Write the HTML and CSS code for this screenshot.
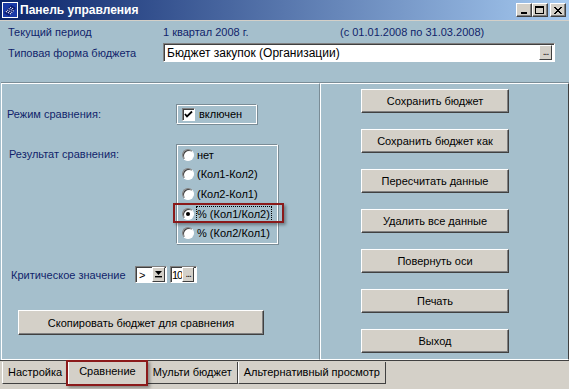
FILE: index.html
```html
<!DOCTYPE html>
<html lang="ru">
<head>
  <meta charset="UTF-8">
  <meta name="viewport" content="width=device-width, initial-scale=1.0">
  <title>Панель управления</title>
  <link rel="stylesheet" href="styles.css">
</head>
<body>
  <div class="window">
    <div class="titlebar">
      <svg class="app-icon" width="16" height="16" viewBox="0 0 16 16">
        <rect x="0" y="0" width="16" height="16" fill="#fff"/>
        <rect x="1" y="1" width="14" height="14" fill="#1a3aa8"/>
        <path d="M2 11 L9 3 L14 6 L7 14 Z" fill="#0a1a70"/>
        <path d="M4 10 L9 5 M6 11 L11 6 M8 12 L12 8" stroke="#fff" stroke-width="1.2" stroke-dasharray="1 1"/>
      </svg>
      <span class="title">Панель управления</span>
      <div class="wbtns">
        <span class="wbtn"><span class="min-glyph"></span></span>
        <span class="wbtn"><span class="max-glyph"></span></span>
        <span class="wbtn close">
          <svg width="8" height="7" viewBox="0 0 8 7"><path d="M0 0 L7 7 M1 0 L8 7 M7 0 L0 7 M8 0 L1 7" stroke="#000" stroke-width="1"/></svg>
        </span>
      </div>
    </div>

    <div class="client">
      <div class="header">
        <div class="row">
          <span class="label">Текущий период</span>
          <span class="period">1 квартал 2008 г.</span>
          <span class="dates">(с 01.01.2008 по 31.03.2008)</span>
        </div>
        <div class="row">
          <span class="label">Типовая форма бюджета</span>
          <div class="edit form-edit">
            <span class="edit-text">Бюджет закупок (Организации)</span>
            <span class="dots-btn">...</span>
          </div>
        </div>
      </div>

      <div class="panels">
        <div class="left">
          <div class="mode-row">
            <span class="label mode-label">Режим сравнения:</span>
            <div class="group check-group">
              <span class="checkbox">
                <svg width="9" height="9" viewBox="0 0 9 9"><path d="M1 4 L3 6.5 L8 1.5" stroke="#000" stroke-width="1.8" fill="none"/></svg>
              </span>
              <span>включен</span>
            </div>
          </div>

          <div class="result-row">
            <span class="label result-label">Результат сравнения:</span>
            <div class="group radio-group">
              <div class="radio-item"><span class="radio"></span><span>нет</span></div>
              <div class="radio-item"><span class="radio"></span><span>(Кол1-Кол2)</span></div>
              <div class="radio-item"><span class="radio"></span><span>(Кол2-Кол1)</span></div>
              <div class="radio-item selected"><span class="radio checked"></span><span class="focus">% (Кол1/Кол2)</span></div>
              <div class="radio-item"><span class="radio"></span><span>% (Кол2/Кол1)</span></div>
            </div>
          </div>

          <div class="crit-row">
            <span class="label crit-label">Критическое значение</span>
            <div class="edit combo">
              <span class="edit-text">&gt;</span>
              <span class="combo-btn">
                <svg width="7" height="7" viewBox="0 0 7 7"><path d="M0 0 H7 L3.5 4 Z" fill="#000"/><rect x="0" y="5" width="7" height="1.4" fill="#000"/></svg>
              </span>
            </div>
            <div class="edit value">
              <span class="edit-text">10</span>
              <span class="dots-btn">...</span>
            </div>
          </div>

          <button class="btn copy-btn">Скопировать бюджет для сравнения</button>
        </div>

        <div class="right">
          <button class="btn action">Сохранить бюджет</button>
          <button class="btn action">Сохранить бюджет как</button>
          <button class="btn action">Пересчитать данные</button>
          <button class="btn action">Удалить все данные</button>
          <button class="btn action">Повернуть оси</button>
          <button class="btn action">Печать</button>
          <button class="btn action">Выход</button>
        </div>
      </div>
    </div>

    <div class="tabs">
      <span class="tab first">Настройка</span>
      <span class="tab active">Сравнение</span>
      <span class="tab">Мульти бюджет</span>
      <span class="tab">Альтернативный просмотр</span>
    </div>
  </div>
</body>
</html>
```

FILE: styles.css
```css
body {
  margin: 0;
  padding: 0;
  font-family: "Liberation Sans", Arial, sans-serif;
  font-size: 11px;
  background-color: #d4d0c8;
}
.window {
  width: 569px;
  height: 389px;
  display: flex;
  flex-direction: column;
  background-color: #d4d0c8;
  overflow: hidden;
}

/* title bar */
.titlebar {
  height: 20px;
  display: flex;
  align-items: center;
  padding-left: 2px;
  background: linear-gradient(to right, #0a246a, #a6caf0);
  border-bottom: 1px solid #d4d0c8;
}
.app-icon {
  margin-right: 2px;
}
.title {
  color: #fff;
  font-weight: bold;
  font-size: 12px;
}
.wbtns {
  margin-left: auto;
  margin-right: 3px;
  display: flex;
}
.wbtn {
  width: 14px;
  height: 12px;
  background-color: #d4d0c8;
  border: 1px solid;
  border-color: #fff #404040 #404040 #fff;
  box-shadow: inset -1px -1px 0 #808080;
  display: flex;
  align-items: center;
  justify-content: center;
  position: relative;
}
.wbtn.close {
  margin-left: 2px;
}
.min-glyph {
  width: 6px;
  height: 2px;
  background-color: #000;
  margin-top: 6px;
  margin-right: 1px;
}
.max-glyph {
  width: 7px;
  height: 5px;
  border: 1px solid #000;
  border-top-width: 2px;
  margin-right: 1px;
}

/* client area */
.client {
  flex: 1;
  display: flex;
  flex-direction: column;
  background-color: #a5bfcc;
}
.header {
  height: 58px;
  padding: 3px 0 0 8px;
}
.row {
  display: flex;
  align-items: center;
}
.row:first-child {
  height: 16px;
}
.row + .row {
  margin-top: 3px;
}
.label {
  color: #111f6b;
}
.row .label {
  width: 155px;
}
.period {
  color: #111f6b;
  width: 177px;
}
.dates {
  color: #111f6b;
}

.edit {
  background-color: #fff;
  border: 1px solid;
  border-color: #808080 #fff #fff #808080;
  box-shadow: inset 1px 1px 0 #404040;
  display: flex;
  align-items: center;
  box-sizing: border-box;
  color: #000;
}
.edit-text {
  flex: 1;
  padding-left: 3px;
  padding-top: 1px;
}
.form-edit {
  width: 392px;
  height: 19px;
  font-size: 12px;
}
.dots-btn {
  width: 11px;
  height: 13px;
  margin-right: 2px;
  background-color: #d4d0c8;
  border: 1px solid;
  border-color: #fff #404040 #404040 #fff;
  font-size: 10px;
  line-height: 11px;
  text-align: center;
  letter-spacing: -1px;
}

/* panels */
.panels {
  flex: 1;
  display: flex;
  margin-left: 1px;
  border-top: 1px solid #7a8c96;
}
.left {
  width: 317px;
  border: 1px solid;
  border-color: #fff #7a8c96 #fff #fff;
  display: flex;
  flex-direction: column;
  padding-top: 20px;
}
.right {
  flex: 1;
  border: 1px solid;
  border-color: #fff #404040 #fff #fff;
  display: flex;
  flex-direction: column;
  padding: 5px 0 0 40px;
  gap: 16px;
}

.group {
  border: 1px solid;
  border-color: #7a8c96 #fff #fff #7a8c96;
  box-shadow: inset 1px 1px 0 #fff, 1px 1px 0 #7a8c96;
  box-sizing: border-box;
}

.mode-row {
  display: flex;
  align-items: center;
}
.mode-label {
  width: 169px;
  padding-left: 5px;
}
.check-group {
  width: 81px;
  height: 20px;
  display: flex;
  align-items: center;
  padding-left: 5px;
  color: #000;
}
.checkbox {
  width: 13px;
  height: 13px;
  box-sizing: border-box;
  background-color: #fff;
  border: 1px solid;
  border-color: #808080 #fff #fff #808080;
  box-shadow: inset 1px 1px 0 #404040;
  display: flex;
  align-items: center;
  justify-content: center;
  margin-right: 4px;
}

.result-row {
  display: flex;
  margin-top: 20px;
}
.result-label {
  width: 167px;
  padding-left: 7px;
  padding-top: 4px;
}
.radio-group {
  width: 102px;
  height: 100px;
  display: flex;
  flex-direction: column;
  padding-left: 5px;
}
.radio-item {
  height: 20px;
  display: flex;
  align-items: center;
  color: #000;
  position: relative;
}
.radio {
  width: 12px;
  height: 12px;
  box-sizing: border-box;
  border-radius: 50%;
  background-color: #fff;
  border: 1px solid;
  border-color: #808080 #fff #fff #808080;
  box-shadow: inset 1px 1px 0 #404040;
  margin-right: 3px;
  display: flex;
  align-items: center;
  justify-content: center;
}
.radio.checked::before {
  content: "";
  width: 4px;
  height: 4px;
  border-radius: 50%;
  background-color: #000;
}
.focus {
  outline: 1px dotted #000;
  padding: 1px 1px 1px 0;
}
.selected::after {
  content: "";
  position: absolute;
  left: -9px;
  right: -7px;
  top: -1px;
  bottom: 0;
  border: 2px solid #8b1a1a;
  box-shadow: 2px 2px 3px rgba(0, 0, 0, 0.35);
}

.crit-row {
  display: flex;
  align-items: center;
  margin-top: 22px;
}
.crit-label {
  width: 124px;
  padding-left: 9px;
}
.combo {
  width: 32px;
  height: 17px;
}
.combo-btn {
  width: 11px;
  height: 13px;
  margin-right: 1px;
  background-color: #d4d0c8;
  border: 1px solid;
  border-color: #fff #404040 #404040 #fff;
  display: flex;
  align-items: center;
  justify-content: center;
}
.value {
  width: 27px;
  height: 17px;
  margin-left: 3px;
}
.value .edit-text {
  padding-left: 1px;
  letter-spacing: -1px;
}

.btn {
  font-family: "Liberation Sans", Arial, sans-serif;
  font-size: 11px;
  color: #000;
  background-color: #d4d0c8;
  border: 1px solid;
  border-color: #fff #404040 #404040 #fff;
  box-shadow: inset -1px -1px 0 #808080;
  padding: 0;
}
.copy-btn {
  width: 246px;
  height: 25px;
  margin: 27px 0 0 16px;
}
.action {
  width: 148px;
  height: 24px;
}

/* tabs */
.tabs {
  height: 28px;
  display: flex;
  align-items: flex-start;
  padding-left: 2px;
  border-top: 1px solid #404040;
}
.tab {
  height: 21px;
  line-height: 21px;
  padding: 0 5px;
  border: 1px solid;
  border-top: none;
  border-color: #fff #404040 #404040 #fff;
  margin-top: 1px;
  color: #000;
  font-size: 11px;
}
.tab.active {
  height: 24px;
  line-height: 22px;
  margin-top: -1px;
  padding: 0 10px;
  position: relative;
}
.tab.active::after {
  content: "";
  position: absolute;
  left: -3px;
  right: -2px;
  top: 0;
  bottom: -2px;
  border: 2px solid #8b1a1a;
  box-shadow: 2px 2px 3px rgba(0, 0, 0, 0.35);
}
```
